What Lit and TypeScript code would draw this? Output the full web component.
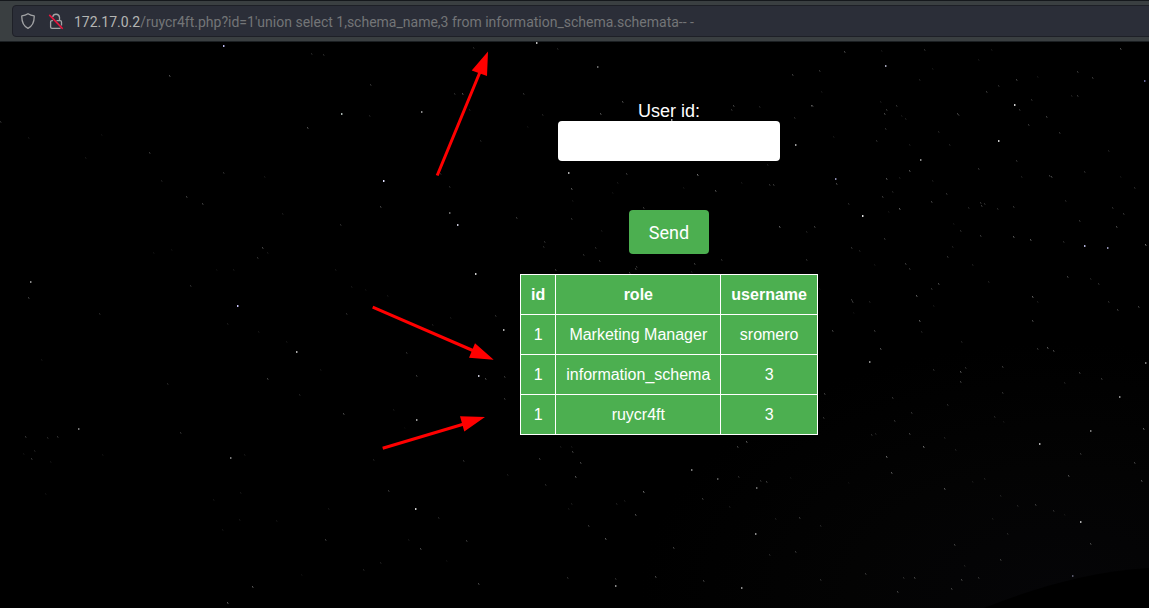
import { LitElement, html, svg, css } from "lit";
import { customElement } from "lit/decorators.js";

// x, y, lightness (0-255) of each star, in window coordinates
const STARS: number[][] = [
  [169,75,110],[311,53,50],[323,54,55],[370,84,70],[307,127,110],[369,115,40],[0,121,60],[28,137,28],[101,134,18],[85,157,30],[149,152,75],
  [223,172,60],[161,180,40],[186,196,85],[202,203,85],[264,176,28],[380,206,90],[340,224,60],[282,213,35],[262,247,95],[257,257,65],[267,252,30],
  [28,297,85],[190,285,60],[99,313,50],[346,313,55],[335,269,30],[351,286,28],[233,269,30],[216,269,18],[153,252,22],[171,249,20],[365,289,20],
  [227,323,35],[258,331,30],[286,341,25],[320,369,25],[41,359,25],[167,383,50],[267,378,90],[299,394,45],[343,413,100],[180,432,65],
  [25,436,70],[47,437,50],[57,436,65],[34,450,40],[31,458,70],[23,453,22],[50,461,24],[102,454,22],[244,454,28],[45,493,22],[240,492,30],[373,459,40],
  [213,499,26],[239,519,30],[222,529,26],[276,520,24],[328,508,30],[325,539,80],[380,562,40],[363,569,45],[252,586,120],[227,602,120],[301,574,18],
  [473,47,50],[557,48,45],[454,93,55],[462,93,100],[469,109,40],[480,140,45],[449,186,55],[440,173,45],[416,375,80],[406,352,60],[495,315,60],
  [432,324,35],[450,317,30],[504,376,70],[485,378,95],[504,398,70],[393,409,30],[387,295,25],[404,427,12],
  [523,93,65],[622,101,100],[600,113,110],[542,114,45],[527,126,22],[733,105,90],[731,109,60],[759,106,45],[812,105,80],[794,117,45],
  [626,173,75],[697,174,160],[571,188,120],[617,182,30],[769,184,65],[741,182,30],[715,190,110],[612,192,22],[683,187,25],[643,207,75],
  [516,217,75],[571,218,65],[572,200,25],[779,226,130],[814,226,80],[601,230,30],[544,241,60],[543,246,50],[595,247,55],[583,254,60],
  [599,260,75],[694,263,80],[555,269,75],[635,268,80],[636,266,65],[629,272,75],[691,271,35],[721,259,60],[767,164,35],
  [844,51,95],[924,49,60],[881,50,28],[991,49,30],[1120,48,100],[819,70,70],[792,74,85],[978,59,30],[1016,79,90],[919,79,45],
  [932,68,30],[1037,76,28],[1077,71,75],[1092,77,75],[998,85,60],[986,91,75],[1077,95,70],[1071,95,40],[1031,99,60],[811,105,120],
  [821,91,30],[896,105,65],[880,101,35],[884,113,95],[886,109,70],[901,115,28],[905,118,40],[957,113,90],[958,114,70],[1019,109,60],
  [1046,116,85],[1028,124,75],[1059,132,70],[885,128,60],[876,140,60],[938,131,50],[909,144,35],[949,144,45],[833,136,30],[794,117,55],
  [909,170,110],[886,178,110],[899,177,35],[932,180,35],[978,168,70],[1016,160,65],[1021,176,40],[1049,175,80],[1051,176,90],[1084,171,60],
  [1108,150,45],[1134,187,55],[1120,176,25],[773,184,75],[836,183,95],[946,193,65],[882,196,75],[892,191,45],[848,203,55],[931,201,90],
  [899,208,130],[888,211,25],[980,202,65],[984,203,60],[981,205,80],[968,207,50],[997,208,55],[1013,206,70],[1112,207,60],[1123,213,70],
  [1065,200,50],[1079,220,70],[1116,226,100],[779,226,130],[814,226,85],[806,231,40],[960,230,60],[953,223,25],[980,235,75],[1013,236,120],
  [1030,239,120],[1063,241,55],[884,238,70],[851,247,65],[859,250,40],[952,246,40],[1145,244,150],[947,256,65],[905,263,80],[909,268,65],
  [806,259,60],[874,264,25],[972,264,40],[988,281,45],[1067,276,90],[1090,278,45],[1098,283,60],[938,283,100],[931,288,65],[916,295,130],
  [819,288,20],[851,299,75],[852,301,80],[869,301,40],[1032,296,130],[1037,301,35],[1108,301,60],[1117,309,85],[1138,306,90],[919,320,130],
  [1032,320,100],[933,305,28],[853,312,20],
  [832,330,90],[874,330,80],[921,331,45],[880,348,110],[961,341,45],[1047,347,120],[1053,350,100],[1037,348,70],[933,369,60],[960,371,120],
  [965,367,60],[960,381,85],[1002,366,75],[1002,392,65],[1079,372,85],[1101,378,75],[1064,382,45],[824,393,80],[823,417,65],[892,397,70],
  [947,404,60],[911,412,70],[894,420,70],[875,433,45],[871,434,60],[909,433,90],[994,416,50],[1003,421,30],[1143,428,130],
  [944,437,45],[955,449,45],[923,446,150],[886,456,145],[891,472,120],[1080,453,70],[1134,462,90],[1068,475,110],[1141,480,110],[984,478,45],
  [944,488,120],[972,481,35],[1000,495,45],[1035,504,85],[1017,505,50],[1053,510,65],[1064,514,30],[799,517,75],[775,518,40],[820,525,50],
  [766,481,80],[790,477,25],[848,482,22],[1007,533,55],[992,518,40],[954,544,90],[1090,543,100],[795,551,75],[769,554,55],[1000,559,85],
  [865,573,75],[903,577,60],[914,577,95],[961,579,95],[978,577,70],[820,579,65],[951,588,90],[897,591,95],[964,565,45],
  [463,460,60],[560,446,30],[571,446,25],[539,458,75],[572,451,85],[580,462,95],[575,476,120],[545,484,55],[388,490,75],[438,517,50],
  [466,540,75],[420,548,100],[408,539,28],[478,583,95],[567,577,60],[571,503,35],[568,508,28],[615,578,60],[588,525,75],[605,538,125],
  [616,503,40],[635,514,110],[643,491,150],[624,500,32],[702,498,80],[673,547,90],[746,441,120],[737,446,90],[738,476,60],[655,576,100],
  [703,580,85],[760,480,60],[507,474,35],[446,560,18],[729,506,35]
];

// stars that are bright enough to span several pixels
const BRIGHT: [number, number, string][] = [
  [223,45,"#b9b6ee"],[341,113,"#a8b4b0"],[237,305,"#c8c3fa"],[296,351,"#aaaaaa"],[230,457,"#777777"],[78,428,"#777777"],[30,281,"#888888"],
  [383,180,"#e0e0ff"],[421,111,"#888888"],[457,224,"#c0c0d0"],[475,273,"#cccccc"],[449,212,"#666666"],[536,42,"#bbbbbb"],[503,329,"#aaaaaa"],
  [478,375,"#c0c0d0"],[416,419,"#999999"],[415,508,"#cccccc"],[615,585,"#888888"],[568,172,"#aaaaaa"],[597,66,"#666666"],[671,119,"#999999"],
  [885,65,"#a0a0b4"],[795,144,"#999999"],[1014,104,"#cccccc"],[998,140,"#cccccc"],[920,159,"#888888"],[835,178,"#8888aa"],[862,215,"#dddddd"],
  [1084,245,"#b0b0d8"],[1107,247,"#8d8daf"],[1144,80,"#666699"],[1119,396,"#888888"],[869,361,"#888888"],[1039,443,"#aaaaaa"],[1080,521,"#aaaaaa"],
  [1090,430,"#777777"],[1145,362,"#777777"],[755,533,"#888888"],[691,469,"#777777"],[1072,575,"#555566"],[741,587,"#888888"],
  [717,478,"#555555"],[756,487,"#666666"]
];

const grey = (v: number) => {
  const level = Math.round(v * 0.7);
  return `rgb(${level},${level},${level})`;
};

const ROWS = [
  ["1", "Marketing Manager", "sromero"],
  ["1", "information_schema", "3"],
  ["1", "ruycr4ft", "3"]
];

@customElement("night-sky")
class NightSky extends LitElement {
  static styles = css`
    :host { display: block; width: 1149px; height: 608px; }
    svg { display: block; }
  `;
  render() {
    return html`<svg width="1149" height="608" viewBox="0 0 1149 608">
      <defs>
        <radialGradient id="glow" gradientUnits="userSpaceOnUse" cx="1060" cy="590" r="420" gradientTransform="translate(0 240) scale(1 .6)">
          <stop offset="0" stop-color="#050507"></stop>
          <stop offset=".5" stop-color="#030303"></stop>
          <stop offset="1" stop-color="#000"></stop>
        </radialGradient>
      </defs>
      <rect width="1149" height="608" fill="#000"></rect>
      <rect width="1149" height="608" fill="url(#glow)"></rect>
      <path d="M984 608C1040 586 1090 572 1149 568V608Z" fill="#000"></path>
      ${STARS.map(([x, y, v]) => svg`<rect x=${x} y=${y} width="1" height="1" fill=${grey(v)}></rect>
        <rect x=${x} y=${y + 1} width="2" height="1" fill=${grey(v * 0.45)}></rect>`)}
      ${BRIGHT.map(([x, y, c]) => svg`<rect x=${x} y=${y} width="1" height="2" fill=${c}></rect>
        <rect x=${x + 1} y=${y} width="1" height="2" fill=${c} opacity=".45"></rect>`)}
    </svg>`;
  }
}

@customElement("address-bar")
class AddressBar extends LitElement {
  static styles = css`
    :host { display: block; width: 1338px; }
    .bar {
      box-sizing: border-box; height: 42px; padding: 4px 12px 0 12px;
      background: #3a3f41; border-top: 1px solid #15181c; border-bottom: 1px solid #1b1f22;
    }
    .field {
      box-sizing: border-box; height: 32px; display: flex; align-items: center;
      padding-left: 8px; border: 1px solid #1e2027; border-radius: 4px; background: #2b2e38;
    }
    svg { flex: none; display: block; }
    .lock { margin-left: 12px; }
    .url {
      margin-left: 10px; padding-top: 2px; font: 14px/20px Roboto, sans-serif; color: #737577; white-space: pre;
    }
    .host { color: #b4b5b3; }
  `;
  render() {
    return html`<div class="bar"><div class="field">
      <svg width="15" height="18" viewBox="0 0 15 18" fill="none" stroke="#a2a3a5" stroke-width="1.3" stroke-linejoin="round">
        <path d="M7 1.700C5.200 2.900 3.200 3.600.8 3.900C.6 9.700 1.900 13.700 7 16.300C12.100 13.700 13.400 9.700 13.200 3.900C10.800 3.600 8.800 2.900 7 1.700Z"></path>
      </svg>
      <svg class="lock" width="16" height="18" viewBox="0 0 16 18" fill="none">
        <g stroke="#a2a3a5" stroke-width="1.300">
          <path d="M4.700 5A3.450 3.450 0 0 1 11.500 5.300V8.700"></path>
          <path d="M13.500 13.500V10Q13.500 8.700 12.200 8.700H8.500M4.900 8.700H4Q2.600 8.700 2.600 10V15Q2.600 16.300 4 16.300H12.500"></path>
        </g>
        <path d="M1.300 2.900L14.700 16.700" stroke="#f0153f" stroke-width="1.600"></path>
      </svg>
      <div class="url"><span class="host">172.17.0.2</span>/ruycr4ft.php?id=1'union select 1,schema_name,3 from information_schema.schemata-- -</div>
    </div></div>`;
  }
}

@customElement("app-root")
class AppRoot extends LitElement {
  static styles = css`
    :host {
      display: block; position: relative; width: 1149px; height: 608px; overflow: hidden;
      background: #000; color: #fff; font-family: "Liberation Sans", Arial, sans-serif;
    }
    night-sky { position: absolute; inset: 0; }
    address-bar { position: relative; }
    .page {
      position: relative; width: 1338px; padding-top: 59px;
      display: flex; flex-direction: column; align-items: center;
    }
    form { display: flex; flex-direction: column; align-items: center; }
    label { font-size: 18px; line-height: 20px; }
    input {
      box-sizing: border-box; width: 222px; height: 40px; border: 0; border-radius: 4px;
      padding: 10px; background: #fff; font-size: 16px;
    }
    button {
      width: 80px; height: 44px; margin-top: 49px; padding: 0; border: 0; border-radius: 4px;
      background: #4caf50; color: #fff; font: 18px Roboto, sans-serif;
    }
    table {
      margin-top: 20px; border-collapse: collapse; background: #4caf50; font-size: 16px; line-height: 19px;
    }
    th, td { border: 1px solid #fff; padding: 10px; text-align: center; }
    .arrows { position: absolute; left: 0; top: 0; }
  `;
  render() {
    return html`
      <night-sky></night-sky>
      <address-bar></address-bar>
      <div class="page">
        <form>
          <label for="uid">User id:</label>
          <input id="uid" type="text">
          <button type="button">Send</button>
        </form>
        <table>
          <thead><tr><th>id</th><th>role</th><th>username</th></tr></thead>
          <tbody>${ROWS.map(r => html`<tr>${r.map(c => html`<td>${c}</td>`)}</tr>`)}</tbody>
        </table>
      </div>
      <svg class="arrows" width="1149" height="608" viewBox="0 0 1149 608" fill="#f00" stroke="#f00">
        <path d="M437.200 175.500L480 72M372.700 307.200L474 351M382.700 448.300L464 424" stroke-width="3"></path>
        <path d="M488 51.500L487 76L471.700 70.500ZM493.700 359.800L475 343.300L469 357.700ZM485 417L460 416.300L464.300 431.500Z" stroke="none"></path>
      </svg>`;
  }
}
